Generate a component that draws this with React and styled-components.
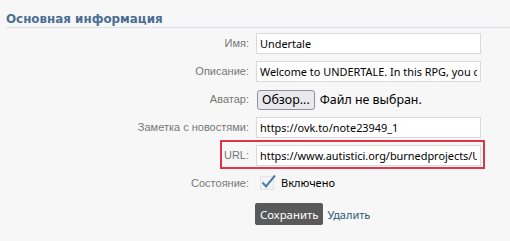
import React from "react";
import styled, { createGlobalStyle } from "styled-components";

const GlobalStyle = createGlobalStyle`
  html, body {
    margin: 0;
    padding: 0;
    background: #f7f7f7;
  }
  body {
    font-family: "Liberation Sans", Arial, sans-serif;
    font-size: 11px;
    color: #000;
  }
`;

const fields = [
  { label: "Имя:", value: "Undertale" },
  { label: "Описание:", value: "Welcome to UNDERTALE. In this RPG, you control a human who falls underground" },
];

const App = () => {
  return (
    <>
      <GlobalStyle />
      <Page>
        <Heading>Основная информация</Heading>
        <Form>
          {fields.map((f) => (
            <Row key={f.label}>
              <Label>{f.label}</Label>
              <TextInput readOnly value={f.value} />
            </Row>
          ))}
          <Row>
            <Label>Аватар:</Label>
            <FileWrap>
              <FileButton type="button">Обзор...</FileButton>
              <FileName>Файл не выбран.</FileName>
            </FileWrap>
          </Row>
          <Row>
            <Label>Заметка с новостями:</Label>
            <TextInput readOnly value="https://ovk.to/note23949_1" />
          </Row>
          <Row>
            <Highlight />
            <Label>URL:</Label>
            <TextInput readOnly value="https://www.autistici.org/burnedprojects/UNDERTALE" />
          </Row>
          <Row>
            <Label>Состояние:</Label>
            <CheckWrap>
              <svg width="18" height="18" viewBox="0 0 18 18">
                <rect x="0.5" y="3.5" width="13" height="13" fill="#f2f4f7" stroke="#dfe3e8" />
                <path d="M2.5 9.5 L6 13.5 L15 2.5" fill="none" stroke="#4f7cab" strokeWidth="2" />
              </svg>
              <span>Включено</span>
            </CheckWrap>
          </Row>
          <Row>
            <span />
            <Actions>
              <SaveButton type="button">Сохранить</SaveButton>
              <DeleteLink href="#">Удалить</DeleteLink>
            </Actions>
          </Row>
        </Form>
      </Page>
    </>
  );
};

const Page = styled.div`
  width: 510px;
  height: 241px;
  overflow: hidden;
  padding-top: 12px;
  box-sizing: border-box;
`;

const Heading = styled.div`
  margin-left: 6px;
  padding: 0 0 1px 0;
  border-bottom: 1px solid #dde3eb;
  font-family: "DejaVu Sans", Verdana, sans-serif;
  font-weight: bold;
  font-size: 11.9px;
  color: #4a6d96;
  line-height: 14px;
`;

const Form = styled.div`
  display: flex;
  flex-direction: column;
  gap: 7px;
  margin-top: 5px;
`;

const Row = styled.div`
  position: relative;
  display: grid;
  grid-template-columns: 249px 225px;
  column-gap: 7px;
  align-items: start;
  min-height: 21px;
`;

const Label = styled.div`
  text-align: right;
  color: #777;
  font-size: 11px;
  padding-top: 4px;
`;

const TextInput = styled.input`
  box-sizing: border-box;
  width: 225px;
  height: 21px;
  margin: 0;
  padding: 0 3px;
  border: 1px solid #d9d9d9;
  background: #fff;
  font-family: "Noto Sans", sans-serif;
  font-size: 10.9px;
  color: #000;
  outline: none;
`;

const FileWrap = styled.div`
  display: flex;
  align-items: center;
  gap: 5px;
  height: 21px;
  font-family: "Noto Sans", sans-serif;
  font-size: 12.4px;
`;

const FileButton = styled.button`
  height: 20px;
  margin: 0 0 0 1px;
  padding: 0 4px;
  border: 1px solid #8f8f9d;
  border-radius: 3px;
  background: #e9e9ed;
  font-family: "Noto Sans", sans-serif;
  font-size: 12.4px;
  color: #000;
`;

const FileName = styled.span`
  color: #000;
`;

const Highlight = styled.div`
  position: absolute;
  left: 220px;
  top: -5px;
  width: 265px;
  height: 29px;
  box-sizing: border-box;
  border: 2px solid #e0344b;
  pointer-events: none;
`;

const CheckWrap = styled.div`
  display: flex;
  align-items: center;
  gap: 3px;
  padding-left: 4px;
  font-family: "Noto Sans", sans-serif;
  font-size: 11px;
  margin-top: 0;
`;

const Actions = styled.div`
  display: flex;
  align-items: center;
  gap: 4px;
  margin-top: 2px;
`;

const SaveButton = styled.button`
  height: 22px;
  padding: 0 5px;
  border: none;
  border-radius: 2px;
  background: #595959;
  color: #fff;
  font-family: "Noto Sans", sans-serif;
  font-size: 11.4px;
  margin-left: -1px;
`;

const DeleteLink = styled.a`
  color: #2b587a;
  text-decoration: none;
  font-family: "Noto Sans", sans-serif;
  font-size: 11px;
`;

export default App;
